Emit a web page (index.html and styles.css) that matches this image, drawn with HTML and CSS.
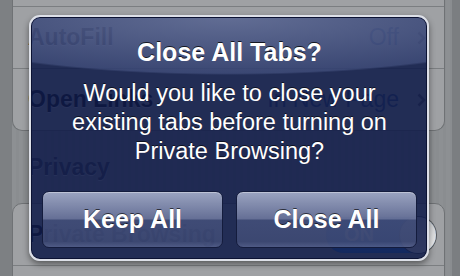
FILE: index.html
```html
<!DOCTYPE html>
<html lang="en">
    <head>
        <meta charset="UTF-8">
        <meta name="viewport" content="width=device-width, initial-scale=1.0">
        <title>Close All Tabs?</title>
        <link rel="stylesheet" href="styles.css">
    </head>
    <body>
        <div class="screen">
            <div class="edge"></div>
            <div class="settings">
                <div class="group group_top">
                    <div class="row row_stub"></div>
                    <div class="row">
                        <span class="label">AutoFill</span>
                        <span class="value">Off</span>
                        <svg class="chevron" width="9" height="14" viewBox="0 0 9 14"><polyline points="1.5,1.5 7,7 1.5,12.5" /></svg>
                    </div>
                    <div class="row">
                        <span class="label">Open Links</span>
                        <span class="value">In New Page</span>
                        <svg class="chevron" width="9" height="14" viewBox="0 0 9 14"><polyline points="1.5,1.5 7,7 1.5,12.5" /></svg>
                    </div>
                </div>

                <h3 class="group_title">Privacy</h3>

                <div class="group">
                    <div class="row">
                        <span class="label">Private Browsing</span>
                        <span class="switch">
                            <span class="switch_text">ON</span>
                            <span class="switch_knob"></span>
                        </span>
                    </div>
                    <div class="row"></div>
                </div>
            </div>
            <div class="edge edge_right"></div>

            <div class="alert">
                <h2 class="alert_title">Close All Tabs?</h2>
                <p class="alert_message">Would you like to close your<br>existing tabs before turning on<br>Private Browsing?</p>
                <div class="alert_buttons">
                    <div class="alert_button">Keep All</div>
                    <div class="alert_button">Close All</div>
                </div>
            </div>
        </div>
    </body>
</html>
```

FILE: styles.css
```css
html, body {
    margin: 0;
    padding: 0;
}

body {
    font-family: "Liberation Sans", Arial, sans-serif;
    background: #8b8e91;
}

.screen {
    --page-background: #8c8f92;
    --group-background: #9fa1a4;
    --group-border: #6f7275;
    --label-color: #111317;
    --value-color: #34507f;
    --alert-fill: rgba(14, 26, 72, .86);
    position: relative;
    display: flex;
    width: 460px;
    height: 276px;
    overflow: hidden;
}

.edge {
    width: 12px;
    background: #7d8083;
}

.edge.edge_right {
    width: 8px;
    background: #7b7e81;
}

.settings {
    width: 440px;
    background: repeating-linear-gradient(90deg, #8d9093 0 4px, #8a8d90 4px 7px);
}

.group {
    margin-right: 7px;
    background: var(--group-background);
    border: 1px solid var(--group-border);
    border-radius: 10px;
}

.group.group_top {
    border-top: none;
    border-top-left-radius: 0;
    border-top-right-radius: 0;
}

.row {
    display: flex;
    align-items: center;
    height: 61px;
    padding: 0 18px 0 15px;
    border-top: 1px solid #7b7e81;
}

.row:first-child {
    border-top: none;
}

.row.row_stub {
    height: 6px;
}

.row.row_stub + .row {
    border-top: 1px solid #7b7e81;
}

.label {
    flex: 1;
    font-size: 23px;
    font-weight: bold;
    color: var(--label-color);
    text-shadow: 0 1px 0 rgba(255, 255, 255, .35);
}

.value {
    font-size: 23px;
    color: var(--value-color);
    margin-right: 18px;
}

.chevron {
    fill: none;
    stroke: #55585c;
    stroke-width: 2.5;
}

.group_title {
    margin: 0;
    height: 72px;
    padding-left: 16px;
    display: flex;
    align-items: center;
    font-size: 23px;
    font-weight: bold;
    color: #3f4552;
    text-shadow: 0 1px 0 rgba(255, 255, 255, .4);
    box-sizing: border-box;
}

.switch {
    position: relative;
    display: flex;
    align-items: center;
    width: 110px;
    height: 36px;
    margin-right: -10px;
    border-radius: 18px;
    background: linear-gradient(#1a5fc0, #3b8ef0);
    box-shadow: inset 0 1px 3px rgba(0, 0, 0, .5);
}

.switch_text {
    flex: 1;
    padding-left: 18px;
    font-size: 20px;
    font-weight: bold;
    color: #fff;
}

.switch_knob {
    width: 36px;
    height: 36px;
    border-radius: 50%;
    background: linear-gradient(#c9cbce, #f2f2f2);
    box-shadow: 0 0 0 1px #55585c;
}

/* the alert floats over the settings list */
.alert {
    position: absolute;
    left: 29px;
    top: 15px;
    width: 400px;
    height: 246px;
    box-sizing: border-box;
    display: flex;
    flex-direction: column;
    padding: 20px 10px 11px 11px;
    border: 2px solid #dde0e8;
    border-radius: 11px;
    background:
        radial-gradient(ellipse 330px 58px at 50% 0, rgba(150, 162, 200, .55), rgba(95, 110, 160, .4) 97%, transparent 100%),
        var(--alert-fill);
    box-shadow: inset 0 0 0 1px #0b1233, 0 3px 6px rgba(0, 0, 0, .45);
    color: #fff;
}

.alert_title {
    margin: 0;
    font-size: 25px;
    line-height: 30px;
    font-weight: bold;
    text-align: center;
    text-shadow: 0 -1px 0 rgba(0, 0, 0, .75);
}

.alert_message {
    margin: 12px 0 0;
    font-size: 23.5px;
    line-height: 29px;
    text-align: center;
    text-shadow: 0 -1px 0 rgba(0, 0, 0, .6);
}

.alert_buttons {
    display: flex;
    gap: 13px;
    height: 57px;
    margin-top: auto;
}

.alert_button {
    flex: 1;
    display: flex;
    align-items: center;
    justify-content: center;
    border: 1px solid #141c3d;
    border-radius: 7px;
    background: linear-gradient(rgba(165, 174, 202, .92) 0%, rgba(112, 122, 160, .86) 49%, rgba(70, 82, 125, .82) 51%, rgba(66, 78, 120, .8) 90%, rgba(90, 102, 145, .8) 100%);
    box-shadow: inset 0 1px 0 rgba(255, 255, 255, .35);
    font-size: 25px;
    font-weight: bold;
    text-shadow: 0 -1px 0 rgba(0, 0, 0, .65);
}
```
